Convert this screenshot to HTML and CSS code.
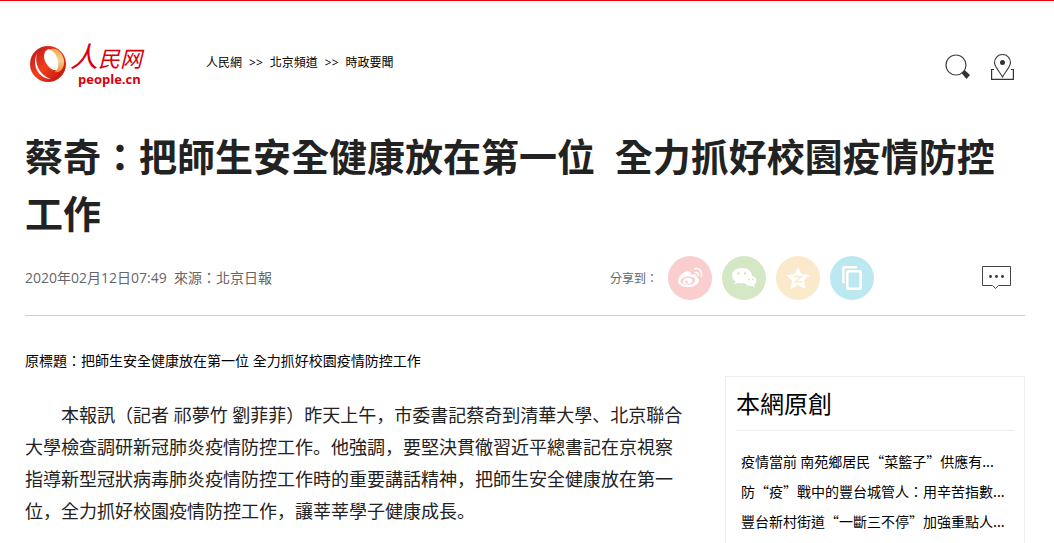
FILE: index.html
```html
<!DOCTYPE html>
<html lang="zh-Hant">

<head>
    <meta charset="UTF-8">
    <meta name="viewport" content="width=device-width, initial-scale=1">
    <title>蔡奇：把師生安全健康放在第一位 全力抓好校園疫情防控工作</title>
    <link rel="stylesheet" href="styles.css">
</head>

<body>

    <!-- 頂部 -->
    <header class="header">
        <a href="#" class="logo">
            <svg class="logo-ball" viewBox="0 0 38 38" aria-hidden="true">
                <defs>
                    <linearGradient id="red" x1="0" y1="0" x2="1" y2="1">
                        <stop offset="0" stop-color="#b80f14" />
                        <stop offset="0.5" stop-color="#f2401f" />
                        <stop offset="1" stop-color="#b5060d" />
                    </linearGradient>
                    <linearGradient id="gold" x1="0" y1="0" x2="0" y2="1">
                        <stop offset="0" stop-color="#f0a550" />
                        <stop offset="0.5" stop-color="#fbd193" />
                        <stop offset="1" stop-color="#ee8c3c" />
                    </linearGradient>
                </defs>
                <circle cx="19" cy="19" r="18" fill="url(#red)" />
                <path d="M22 4C29 2 36 10 35 19C34 25 30 28 26 27C31 22 30 11 22 5Z" fill="url(#gold)" />
                <path d="M20 4C14 6 14 13 17 18C20 23 24 26 28 25C31 19 29 9 22 5Z" fill="#fff" />
                <path d="M8 8C5 18 10 30 22 34C11 34 2 22 8 8Z" fill="#fff" />
            </svg>
            <span class="logo-text">
                <span class="logo-cn"><span class="logo-big">人</span>民网</span>
                <span class="logo-en">people.cn</span>
            </span>
        </a>
        <nav class="path">
            <a href="#">人民網</a>
            <span>&gt;&gt;</span>
            <a href="#">北京頻道</a>
            <span>&gt;&gt;</span>
            <a href="#">時政要聞</a>
        </nav>
        <div class="tools">
            <button type="button" aria-label="搜索">
                <svg width="26" height="28" viewBox="0 0 26 28">
                    <circle cx="11" cy="11" r="10" fill="#fff" stroke="#444" stroke-width="1.2" />
                    <path d="M16.500 19L19.500 16L25 21L21.500 25Z" fill="#333" />
                </svg>
            </button>
            <button type="button" aria-label="地方">
                <svg width="24" height="28" viewBox="0 0 24 28">
                    <path d="M3 15.500H0.600V25.400H22.400V15.500H20" fill="none" stroke="#333" stroke-width="1.2" />
                    <path d="M11.500 23C9 18 3.500 13 3.500 8.500A8 8 0 0 1 19.500 8.500C19.500 13 14 18 11.500 23Z" fill="#fff" stroke="#444" stroke-width="1.2" />
                    <circle cx="11.500" cy="8.500" r="2.500" fill="#333" />
                </svg>
            </button>
        </div>
    </header>

    <!-- 標題 -->
    <div class="title">
        <h1>蔡奇：把師生安全健康放在第一位&nbsp; 全力抓好校園疫情防控工作</h1>
        <div class="info">
            <p class="date">2020年02月12日07:49&nbsp; 來源：<a href="#">北京日報</a></p>
            <div class="share">
                <span>分享到：</span>
                <a href="#" class="weibo" aria-label="微博">
                    <svg viewBox="0 0 44 44">
                        <path fill="#fff" fill-rule="evenodd" d="M10 25C10 20 17 14 21 15.500C23 16 23 18 22.500 19C26 17.500 29 18 28.500 21C31 22 31 24 31 25C30 29 25 31 20 31C14 31 10 28.500 10 25ZM12.500 25.500C13 28 17 29.500 21 29C25 28.500 27.500 26 27 23.500C26.500 21 23 20 19 20.500C15 21 12.500 23 12.500 25.500Z" />
                        <path fill="#fff" fill-rule="evenodd" d="M15 25C15.500 22 19 21 22 22C25 23 25 26 22 27.500C18 29.500 14.500 28 15 25ZM17 26A1.500 1.500 0 1 0 20 26A1.500 1.500 0 1 0 17 26Z" />
                        <path d="M26 13C31 11.500 35 15 33 21M26.500 16.500C29 16 31 17.500 30 20" fill="none" stroke="#fff" stroke-width="1.500" />
                    </svg>
                </a>
                <a href="#" class="weixin" aria-label="微信">
                    <svg viewBox="0 0 44 44">
                        <path fill="#fff" d="M20 12C14 12 10 15.500 10 19.500C10 22 11.500 24 13.500 25.500L12.500 28.500L16 26.700C18 27.400 21 27.500 23 27C24.500 29.500 27.500 30.300 30 29.700L33 31.500L32.200 29C35.500 26.500 35 22 31.500 20.500L30 20C30 15.500 26 12 20 12Z" />
                        <g fill="#d4e8c6">
                            <circle cx="16.500" cy="17.500" r="1.200" />
                            <circle cx="23" cy="17.500" r="1.200" />
                            <circle cx="27" cy="23.500" r="1" />
                            <circle cx="31" cy="23.500" r="1" />
                        </g>
                    </svg>
                </a>
                <a href="#" class="qzone" aria-label="QQ空間">
                    <svg viewBox="0 0 44 44">
                        <path fill="#fff" d="M22 11L25.300 18L34 19L28 24.500L29.500 33L22 29L14.500 33L16 24.500L10 19L18.700 18Z" />
                        <path d="M18 20.500H25.500L19 26H26.500" fill="none" stroke="#fbe9cb" stroke-width="1.300" />
                    </svg>
                </a>
                <a href="#" class="copy" aria-label="複製">
                    <svg viewBox="0 0 44 44" fill="none" stroke="#fff" stroke-width="2.600">
                        <path d="M13.300 27V12.800Q13.300 11.300 15 11.300H27" />
                        <rect x="17.300" y="15.300" width="13.400" height="17.400" rx="1" />
                    </svg>
                </a>
            </div>
            <button type="button" class="comment" aria-label="評論">
                <svg width="30" height="24" viewBox="0 0 30 24">
                    <path d="M0.500 0.500H28.500V19.500H16.500L13.500 22.500L10.500 19.500H0.500Z" fill="#fff" stroke="#444" />
                    <g fill="#333">
                        <circle cx="8.500" cy="10.500" r="1.400" />
                        <circle cx="14.500" cy="10.500" r="1.400" />
                        <circle cx="20.500" cy="10.500" r="1.400" />
                    </g>
                </svg>
            </button>
        </div>
    </div>

    <!-- 正文 -->
    <div class="main">
        <article class="article">
            <p class="origin">原標題：把師生安全健康放在第一位 全力抓好校園疫情防控工作</p>
            <p class="text">本報訊（記者 祁夢竹 劉菲菲）昨天上午，市委書記蔡奇到清華大學、北京聯合大學檢查調研新冠肺炎疫情防控工作。他強調，要堅決貫徹習近平總書記在京視察指導新型冠狀病毒肺炎疫情防控工作時的重要講話精神，把師生安全健康放在第一位，全力抓好校園疫情防控工作，讓莘莘學子健康成長。</p>
        </article>
        <aside class="side">
            <h2>本網原創</h2>
            <ul>
                <li><a href="#">疫情當前 南苑鄉居民“菜籃子”供應有...</a></li>
                <li><a href="#">防“疫”戰中的豐台城管人：用辛苦指數...</a></li>
                <li><a href="#">豐台新村街道“一斷三不停”加強重點人...</a></li>
            </ul>
        </aside>
    </div>

</body>

</html>
```
FILE: styles.css
```css
* {
    margin: 0;
    padding: 0;
    box-sizing: border-box;
}

body {
    border-top: 1px solid #e60012;
    padding: 0 29px 0 25px;
    background: #fff;
    color: #000;
    font-family: "Open Sans", "Noto Sans CJK JP", sans-serif;
    font-size: 14px;
}

a {
    color: inherit;
    text-decoration: none;
}

button {
    border: 0;
    background: none;
    cursor: pointer;
}

svg {
    display: block;
}

ul {
    list-style: none;
}

/* 頂部 */
.header {
    display: flex;
    align-items: center;
    height: 127px;
    padding: 0 10px 0 4px;
}

.logo {
    display: flex;
    align-items: center;
    gap: 3px;
    width: 177px;
    padding-bottom: 2px;
    color: #d7000f;
}

.logo-ball {
    width: 38px;
    height: 38px;
}

.logo-cn {
    display: block;
    height: 31px;
    font-size: 22px;
    font-style: italic;
    line-height: 28px;
    white-space: nowrap;
}

.logo-big {
    font-size: 28px;
}

.logo-en {
    display: block;
    padding-left: 8px;
    font-size: 13px;
    font-weight: bold;
    line-height: 13px;
}

.path {
    display: flex;
    gap: 7px;
    margin-right: auto;
    font-size: 12px;
    line-height: 20px;
    padding-bottom: 4px;
}

.tools {
    display: flex;
    gap: 20px;
    padding-top: 7px;
}

/* 標題 */
.title {
    border-bottom: 1px solid #ccc;
}

.title h1 {
    color: #222;
    font-size: 38px;
    line-height: 57px;
}

.info {
    display: flex;
    align-items: center;
    padding: 14px 13px 15px 0;
    color: #666;
}

.date {
    margin-right: auto;
    line-height: 20px;
}

.share {
    display: flex;
    align-items: center;
    gap: 10px;
    margin-right: 108px;
    font-size: 12px;
}

.share a {
    width: 44px;
    height: 44px;
    border-radius: 50%;
}

.weibo {
    background: #facdce;
}

.weixin {
    background: #d4e8c6;
}

.qzone {
    background: #fbe9cb;
}

.copy {
    background: #bce8f1;
}

/* 正文 */
.main {
    display: flex;
    justify-content: space-between;
    gap: 40px;
}

.article {
    flex: 1;
    padding-top: 34px;
}

.origin {
    line-height: 22px;
}

/* 標點靠左下 */
.text {
    margin-top: 27px;
    color: #222;
    font-size: 18px;
    line-height: 32px;
    text-indent: 2em;
    font-feature-settings: "locl" 0;
}

.side {
    width: 300px;
    margin-top: 60px;
    padding: 0 10px 20px;
    border: 1px solid #eee;
}

.side h2 {
    border-bottom: 1px solid #eee;
    font-size: 24px;
    font-weight: normal;
    line-height: 53px;
}

.side ul {
    padding: 15px 0 0 5px;
    font-family: "Noto Sans CJK JP", sans-serif;
    line-height: 30px;
}
```
